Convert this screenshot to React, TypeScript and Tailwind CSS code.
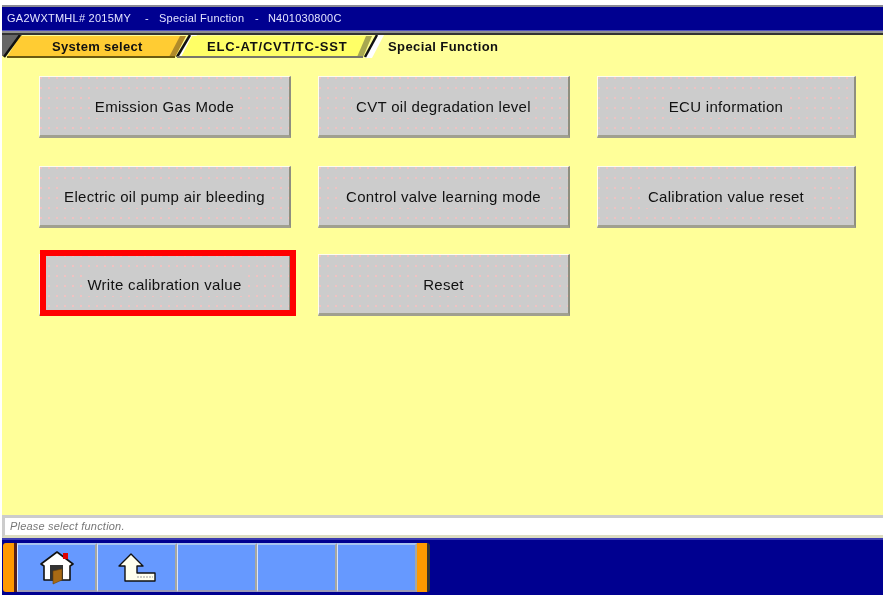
const FONT = "font-['Liberation_Sans',Arial,sans-serif]";

const functions = [
  "Emission Gas Mode",
  "CVT oil degradation level",
  "ECU information",
  "Electric oil pump air bleeding",
  "Control valve learning mode",
  "Calibration value reset",
  "Write calibration value",
  "Reset",
];

function FunctionButton({ label, selected }: { label: string; selected?: boolean }) {
  return (
    <div className="relative h-[62px] pt-[2px] flex items-center justify-center bg-[#cccccc] bg-[radial-gradient(circle_at_1px_1px,#f0c2c2_1px,transparent_1.1px)] bg-[size:8px_10px] border-t border-l border-[#fdfdf0] border-r-2 border-r-[#8f8f80] border-b-[3px] border-b-[#a0a090]">
      <span className="px-1 bg-[#cccccc] text-[15px] tracking-[0.3px] text-[#111111] blur-[0.4px]">{label}</span>
      {selected && <div className="absolute left-0 right-[-7px] top-[-5px] bottom-[-3px] border-[6px] border-[#ff0000]" />}
    </div>
  );
}

function TabStrip() {
  return (
    <div className="relative h-[24px] bg-[#ffff99]">
      <svg className="absolute left-[-2px] top-0" width="400" height="24" viewBox="0 35 400 24">
        <polygon points="2,35 22,35 5,56 2,56" fill="#666666" />
        <polygon points="7,57 20,36 186,36 175,57" fill="#ffcc33" />
        <polygon points="180,36 186,36 175,57 169,57" fill="#b08a2a" />
        <line x1="4" y1="57" x2="20" y2="35" stroke="#111111" strokeWidth="2.5" />
        <line x1="7" y1="57" x2="175" y2="57" stroke="#6b5a10" strokeWidth="2" />
        <polygon points="177,58 190,35 197,35 184,58" fill="#ffffff" />
        <line x1="177" y1="57" x2="190" y2="35" stroke="#111111" strokeWidth="2.5" />
        <polygon points="181,57 192,36 372,36 363,57" fill="#ffff66" />
        <polygon points="366,36 372,36 363,57 357,57" fill="#a8a850" />
        <line x1="177" y1="57" x2="363" y2="57" stroke="#77776a" strokeWidth="2" />
        <polygon points="365,58 377,35 384,35 372,58" fill="#ffffff" />
        <line x1="365" y1="57" x2="377" y2="35" stroke="#111111" strokeWidth="2.5" />
      </svg>
      <div className="relative h-full flex items-center text-[13px] font-bold text-[#111111] blur-[0.3px]">
        <span className="ml-[50px] w-[155px] tracking-[0.3px]">System select</span>
        <span className="w-[181px] tracking-[0.8px]">ELC-AT/CVT/TC-SST</span>
        <span className="tracking-[0.4px]">Special Function</span>
      </div>
    </div>
  );
}

function HomeIcon() {
  return (
    <svg width="34" height="34" viewBox="0 0 34 34">
      <polygon points="17,1 33,13 30,15 30,29 4,29 4,15 1,13" fill="#ffffff" stroke="#111111" strokeWidth="1.6" strokeLinejoin="round" />
      <rect x="23" y="2" width="5" height="6" fill="#e00000" />
      <rect x="10" y="14" width="13" height="15" fill="#333333" />
      <polygon points="13,20 22,18 22,29 13,33" fill="#a86a14" stroke="#6b4208" strokeWidth="0.6" />
    </svg>
  );
}

function BackIcon() {
  return (
    <svg width="38" height="30" viewBox="0 0 38 30">
      <path d="M13 1 L25 13 H19 V20 H37 V28 H7 V13 H1 Z" fill="#ffffee" stroke="#111111" strokeWidth="1.4" strokeLinejoin="round" />
      <path d="M19 24 H35" stroke="#9a9a9a" strokeWidth="1" strokeDasharray="2 1" fill="none" />
    </svg>
  );
}

function BarCap({ side }: { side: "left" | "right" }) {
  return (
    <div
      className={
        side === "left"
          ? "w-[14px] h-[49px] bg-[#ff9900] rounded-l-[3px] border-r-[3px] border-r-[#55201a]"
          : "w-[13px] h-[49px] bg-[#ff9900] rounded-r-[3px] border-r-[3px] border-r-[#333333]"
      }
    />
  );
}

function BarButton({ children }: { children?: React.ReactNode }) {
  return (
    <div className="w-[80px] h-[49px] flex items-center justify-center bg-[#6699ff] border-t-2 border-t-[#a8c4f0] border-b-2 border-b-[#9a9ab8] border-l border-l-[#d8e4ff] border-r-2 border-r-[#a8a8a0]">
      {children}
    </div>
  );
}

export default function App() {
  return (
    <div className={`${FONT} w-[888px] h-[601px] bg-white overflow-hidden`}>
      <div className="w-[883px] h-[595px] pt-[5px] pl-[2px] flex flex-col">
        <div className="h-[2px] bg-[#8a8a94]" />
        <div className="h-[23px] bg-[#000090] flex items-center pl-[5px] text-[11px] tracking-[0.25px] text-[#e4e4ff] blur-[0.4px]">
          <span className="w-[138px]">GA2WXTMHL# 2015MY</span>
          <span className="w-[110px]">-<span className="ml-[10px]">Special Function</span></span>
          <span>-<span className="ml-[9px]">N401030800C</span></span>
        </div>
        <div className="h-[1px] bg-[#5050c0]" />
        <div className="h-[2px] bg-[#909090]" />
        <div className="h-[2px] bg-[#333333]" />
        <TabStrip />
        <main className="flex-1 bg-[#ffff99] flex flex-col">
          <div className="flex-1 pt-[17px] pl-[37px]">
            <div className="grid grid-cols-[252px_252px_259px] grid-rows-[90px_88px_62px] gap-x-[27px] items-start">
              {functions.map((label) => (
                <FunctionButton key={label} label={label} selected={label === "Write calibration value"} />
              ))}
            </div>
          </div>
          <div className="h-[23px] bg-white border-t-[3px] border-t-[#cccccc] border-b-[3px] border-b-[#dcdcc0] border-l-[3px] border-l-[#cccccc] flex items-center pl-[5px]">
            <span className="text-[11px] tracking-[0.2px] italic text-[#777777] blur-[0.3px]">Please select function.</span>
          </div>
        </main>
        <div className="h-[57px] bg-[#000090] border-t-2 border-t-[#3a3ab0] flex items-start pt-[3px] pl-[1px]">
          <BarCap side="left" />
          <BarButton>
            <HomeIcon />
          </BarButton>
          <BarButton>
            <BackIcon />
          </BarButton>
          <BarButton />
          <BarButton />
          <BarButton />
          <BarCap side="right" />
        </div>
      </div>
    </div>
  );
}
